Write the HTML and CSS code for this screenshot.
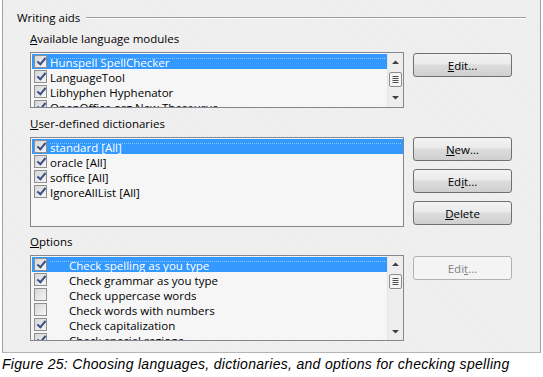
FILE: index.html
```html
<!DOCTYPE html>
<html lang="en">
<head>
    <meta charset="UTF-8">
    <title>Writing aids</title>
    <link rel="stylesheet" href="styles.css">
</head>
<body>
    <div class="frame">
        <div class="group-title">
            <span>Writing aids</span>
            <div class="rule"></div>
        </div>

        <div class="label"><u>A</u>vailable language modules</div>
        <div class="section">
            <div class="listbox short">
                <div class="rows">
                    <div class="row selected"><span class="cb on"></span><span class="t">Hunspell SpellChecker</span></div>
                    <div class="row"><span class="cb on"></span><span class="t">LanguageTool</span></div>
                    <div class="row"><span class="cb on"></span><span class="t">Libhyphen Hyphenator</span></div>
                    <div class="row"><span class="cb on"></span><span class="t">OpenOffice.org New Thesaurus</span></div>
                </div>
                <div class="scrollbar">
                    <svg width="15" height="54" viewBox="0 0 15 54">
                        <path d="M4 11 L7.5 7.5 L11 11 Z" fill="#404040"/>
                        <rect x="1.5" y="19.5" width="12" height="14" rx="1.5" fill="#f4f4f4" stroke="#8c8c8c"/>
                        <path d="M4.5 23.5 H10.5 M4.5 25.5 H10.5 M4.5 27.5 H10.5 M4.5 29.5 H10.5" stroke="#505050"/>
                        <path d="M4 43 L7.5 46.5 L11 43 Z" fill="#404040"/>
                    </svg>
                </div>
            </div>
            <div class="buttons first">
                <button><u>E</u>dit...</button>
            </div>
        </div>

        <div class="label"><u>U</u>ser-defined dictionaries</div>
        <div class="section">
            <div class="listbox dicts">
                <div class="rows">
                    <div class="row selected"><span class="cb on"></span><span class="t">standard [All]</span></div>
                    <div class="row"><span class="cb on"></span><span class="t">oracle [All]</span></div>
                    <div class="row"><span class="cb on"></span><span class="t">soffice [All]</span></div>
                    <div class="row"><span class="cb on"></span><span class="t">IgnoreAllList [All]</span></div>
                </div>
            </div>
            <div class="buttons">
                <button><u>N</u>ew...</button>
                <button>Ed<u>i</u>t...</button>
                <button><u>D</u>elete</button>
            </div>
        </div>

        <div class="label opt"><u>O</u>ptions</div>
        <div class="section">
            <div class="listbox options">
                <div class="rows">
                    <div class="row selected"><span class="cb on"></span><span class="t">Check spelling as you type</span></div>
                    <div class="row"><span class="cb on"></span><span class="t">Check grammar as you type</span></div>
                    <div class="row"><span class="cb"></span><span class="t">Check uppercase words</span></div>
                    <div class="row"><span class="cb"></span><span class="t">Check words with numbers</span></div>
                    <div class="row"><span class="cb on"></span><span class="t">Check capitalization</span></div>
                    <div class="row"><span class="cb on"></span><span class="t">Check special regions</span></div>
                </div>
                <div class="scrollbar">
                    <svg width="15" height="84" viewBox="0 0 15 84">
                        <path d="M4 10 L7.5 6.5 L11 10 Z" fill="#404040"/>
                        <rect x="1.5" y="18.5" width="12" height="14" rx="1.5" fill="#f4f4f4" stroke="#8c8c8c"/>
                        <path d="M4.5 22.5 H10.5 M4.5 24.5 H10.5 M4.5 26.5 H10.5 M4.5 28.5 H10.5" stroke="#505050"/>
                        <path d="M4 74 L7.5 77.5 L11 74 Z" fill="#404040"/>
                    </svg>
                </div>
            </div>
            <div class="buttons first">
                <button disabled>Edi<u>t</u>...</button>
            </div>
        </div>
    </div>
    <div class="caption">Figure 25: Choosing languages, dictionaries, and options for checking spelling</div>
</body>
</html>
```

FILE: styles.css
```css
body {
    margin: 0;
    background: #fff;
    font-family: 'Open Sans', 'Noto Sans', sans-serif;
    font-size: 11.5px;
    color: #000;
}
.frame {
    margin-left: 2px;
    height: 353px;
    border: 1px solid #a0a0a0;
    border-top: none;
    border-bottom-color: #b4b4b4;
    background: #f0f0f0 repeating-linear-gradient(45deg, #f0f0f0 0, #f0f0f0 2px, #ececec 2px, #ececec 3px);
    padding: 0 0 0 27px;
    box-sizing: border-box;
    width: 539px;
}
.group-title {
    display: flex;
    align-items: center;
    gap: 6px;
    margin-left: -13px;
    padding-top: 10px;
    height: 15px;
    line-height: 15px;
}
.group-title .rule {
    flex: 1;
    height: 1px;
    background: #a0a0a0;
    border-bottom: 1px solid #fff;
    margin-right: 14px;
    margin-top: 1px;
}
.label {
    margin-top: 6px;
    height: 15px;
    line-height: 15px;
}
.section + .label { margin-top: 8px; }
.section + .label.opt { margin-top: 7px; }
.section {
    display: flex;
    gap: 9px;
    margin-top: 6px;
}
.listbox {
    width: 372px;
    border: 1px solid #828790;
    background: #f6f6f6;
    display: flex;
    overflow: hidden;
}
.listbox.short { height: 54px; }
.listbox.dicts { height: 88px; }
.listbox.options { height: 84px; }
.rows {
    flex: 1;
    padding: 1px 0 0 1px;
    overflow: hidden;
}
.row {
    height: 15px;
    line-height: 15px;
    display: flex;
    align-items: center;
    white-space: nowrap;
    padding-left: 2px;
}
.row .t {
    padding-top: 2px;
}
.row.selected {
    background: #3399ff;
    color: #fff;
    position: relative;
}
.row.selected::after {
    content: '';
    position: absolute;
    left: 18px;
    right: 2px;
    top: 4px;
    border-top: 1px dotted #8cc6ff;
}
.cb {
    width: 11px;
    height: 11px;
    border: 1px solid #8e8f8f;
    background: linear-gradient(135deg, #d6d6d6, #f6f6f6);
    margin-right: 3px;
    flex: none;
    box-sizing: content-box;
    position: relative;
}
.cb.on::before {
    content: '';
    position: absolute;
    left: 4px;
    top: 0px;
    width: 3px;
    height: 7px;
    border: solid #3f4f87;
    border-width: 0 2px 2px 0;
    transform: rotate(40deg);
}
.options .cb { margin-right: 22px; }
.scrollbar {
    width: 15px;
    background: #eeeeee;
    border-left: 1px solid #e4e4e4;
}
.buttons {
    display: flex;
    flex-direction: column;
    gap: 8px;
}
.buttons.first { padding-top: 1px; }
button {
    width: 99px;
    height: 24px;
    border: 1px solid #707070;
    border-radius: 3px;
    background: linear-gradient(#f2f2f2 0%, #ebebeb 45%, #dddddd 50%, #cfcfcf 100%);
    font-family: 'Open Sans', 'Noto Sans', sans-serif;
    font-size: 11.5px;
    color: #000;
    padding: 0;
}
button:disabled {
    border-color: #adb2b5;
    background: #f4f4f4;
    color: #838383;
}
.caption {
    margin-left: 2px;
    margin-top: 3px;
    font-family: 'Liberation Sans', Arial, sans-serif;
    font-style: italic;
    font-size: 14px;
    letter-spacing: 0.3px;
    color: #000;
}
```
